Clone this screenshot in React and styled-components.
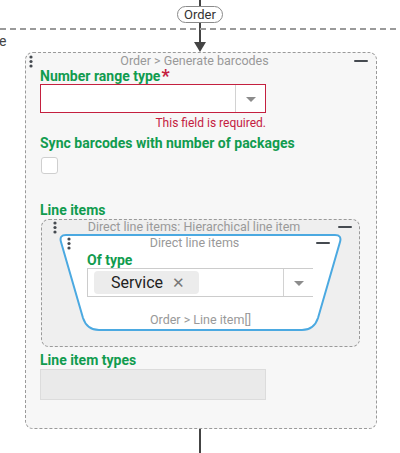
import styled, { createGlobalStyle } from "styled-components";

const GlobalStyle = createGlobalStyle`
  html, body {
    margin: 0;
    padding: 0;
    background: #ffffff;
  }
  body {
    font-family: Roboto, "Liberation Sans", Arial, sans-serif;
  }
  * {
    box-sizing: border-box;
  }
`;

const GREEN = "#119c4f";
const RED = "#c4203f";

const Canvas = styled.div`
  position: relative;
  width: 400px;
  height: 453px;
  overflow: hidden;
  background: #fff;
`;

const LaneLine = styled.div`
  position: absolute;
  top: 28px;
  left: 0;
  right: 0;
  height: 2px;
  background: repeating-linear-gradient(
    to right,
    #9a9a9a 0 6px,
    transparent 6px 10px
  );
`;

const LaneLabel = styled.span`
  position: absolute;
  top: 32px;
  left: -1px;
  font-size: 14px;
  line-height: 18px;
  color: #444;
`;

const Flow = styled.div`
  display: flex;
  flex-direction: column;
  align-items: center;
`;

const Stem = styled.div`
  width: 1.5px;
  height: ${(p) => p.$h}px;
  background: #444;
`;

const Pill = styled.div`
  position: relative;
  height: 17px;
  padding: 0 6px;
  border: 1px solid #8a8a8a;
  border-radius: 9px;
  background: #fff;
  font-size: 13px;
  line-height: 15px;
  color: #333;
`;

const ArrowHead = styled.div`
  width: 0;
  height: 0;
  border-left: 6px solid transparent;
  border-right: 6px solid transparent;
  border-top: 10px solid #444;
`;

const Node = styled.div`
  align-self: flex-start;
  margin-left: 25px;
  width: 352px;
  height: 377px;
  border: 1px dashed #9a9a9a;
  border-radius: 8px;
  background: #f7f7f7;
  padding: 0 0 0 14px;
`;

const Header = styled.div`
  display: flex;
  align-items: center;
  height: ${(p) => p.$h}px;
  margin-left: ${(p) => p.$ml}px;
  margin-right: ${(p) => p.$mr}px;
`;

const Title = styled.div`
  flex: 1;
  text-align: center;
  font-size: 12.5px;
  line-height: 14px;
  color: #999;
  white-space: nowrap;
`;

const Minus = styled.div`
  width: 14px;
  height: 2.5px;
  border-radius: 1px;
  background: #454a50;
  margin-left: ${(p) => p.$gap || 0}px;
`;

const Dots = () => (
  <svg width="8" height="13" viewBox="0 0 8 13">
    <circle cx="4" cy="2" r="1.6" fill="#454a50" />
    <circle cx="4" cy="6.5" r="1.6" fill="#454a50" />
    <circle cx="4" cy="11" r="1.6" fill="#454a50" />
  </svg>
);

const Label = styled.div`
  font-size: 14px;
  font-weight: 700;
  line-height: 15px;
  color: ${GREEN};
  margin-top: ${(p) => p.$mt || 0}px;
  white-space: nowrap;
`;

const Required = styled.span`
  color: ${RED};
  font-size: 18px;
  line-height: 0;
  position: relative;
  top: 1px;
  margin-left: 1px;
`;

const Select = styled.div`
  display: flex;
  align-items: stretch;
  width: 226px;
  height: ${(p) => p.$h}px;
  background: #fff;
  border: 1px solid ${(p) => (p.$invalid ? RED : "#cccccc")};
  ${(p) => p.$open && "border-right: none;"}
  margin-top: ${(p) => p.$mt || 0}px;
`;

const Value = styled.div`
  flex: 1;
  display: flex;
  align-items: center;
  padding-left: 6px;
`;

const Toggle = styled.div`
  width: 30px;
  border-left: 1px solid #d2d2d2;
  display: flex;
  align-items: center;
  justify-content: center;
  padding-top: 2px;
`;

const Caret = styled.div`
  width: 0;
  height: 0;
  border-left: 5px solid transparent;
  border-right: 5px solid transparent;
  border-top: 5px solid #8c8c8c;
`;

const ErrorText = styled.div`
  width: 226px;
  text-align: right;
  font-size: 12px;
  line-height: 14px;
  color: ${RED};
  margin-top: 3px;
`;

const Checkbox = styled.div`
  width: 17px;
  height: 17px;
  margin: 6px 0 0 1px;
  border: 1px solid #cfcfcf;
  border-radius: 3px;
  background: #fff;
`;

const Group = styled.div`
  width: 319px;
  height: 128px;
  margin: 1px 0 0 1px;
  border: 1px dashed #9a9a9a;
  border-radius: 8px;
  background: #efefef;
  display: flex;
  flex-direction: column;
`;

const TrapShape = styled.div`
  position: relative;
  width: 283px;
  height: 97px;
  margin-left: 17px;
`;

const TrapOutline = styled.svg`
  position: absolute;
  inset: 0;
`;

const TrapBody = styled.div`
  position: relative;
  display: flex;
  flex-direction: column;
  padding-top: 2px;
`;

const TrapField = styled.div`
  padding-left: 28px;
`;

const Chip = styled.div`
  display: flex;
  align-items: center;
  width: 105px;
  height: 23px;
  padding-left: 17px;
  border-radius: 4px;
  background: #ececec;
  font-size: 16px;
  color: #222;
`;

const ChipClose = styled.span`
  margin-left: 9px;
  font-size: 15px;
  color: #777;
`;

const Footer = styled.div`
  margin-top: 16px;
  text-align: center;
  font-size: 12.5px;
  line-height: 14px;
  color: #999;
`;

const Disabled = styled.div`
  width: 226px;
  height: 31px;
  margin-top: 1px;
  background: #eaeaea;
  border: 1px solid #dcdcdc;
`;

export default function App() {
  return (
    <Canvas>
      <GlobalStyle />
      <LaneLine />
      <LaneLabel>e</LaneLabel>
      <Flow>
        <Stem $h={6} />
        <Pill>Order</Pill>
        <Stem $h={19} />
        <ArrowHead />
        <Node>
          <Header $h={16} $ml={-13} $mr={8}>
            <Dots />
            <Title>Order &gt; Generate barcodes</Title>
            <Minus />
          </Header>
          <Label>
            Number range type<Required>*</Required>
          </Label>
          <Select $h={29} $invalid>
            <Value />
            <Toggle>
              <Caret />
            </Toggle>
          </Select>
          <ErrorText>This field is required.</ErrorText>
          <Label $mt={6}>Sync barcodes with number of packages</Label>
          <Checkbox />
          <Label $mt={29}>Line items</Label>
          <Group>
            <Header $h={14} $ml={9} $mr={7}>
              <Dots />
              <Title>Direct line items: Hierarchical line item</Title>
              <Minus $gap={9} />
            </Header>
            <TrapShape>
              <TrapOutline width="283" height="97" viewBox="0 0 283 97">
                <path
                  d="M7 1 L276 1 Q283 1 281 8 L259 84 Q255 96 243 96 L40 96 Q28 96 24 84 L2 8 Q0 1 7 1 Z"
                  fill="#ffffff"
                  stroke="#4ba9e1"
                  strokeWidth="2"
                />
              </TrapOutline>
              <TrapBody>
                <Header $h={14} $ml={6} $mr={12}>
                  <Dots />
                  <Title>Direct line items</Title>
                  <Minus />
                </Header>
                <TrapField>
                  <Label $mt={3}>Of type</Label>
                  <Select $h={29} $open>
                    <Value>
                      <Chip>
                        Service<ChipClose>✕</ChipClose>
                      </Chip>
                    </Value>
                    <Toggle>
                      <Caret />
                    </Toggle>
                  </Select>
                </TrapField>
                <Footer>Order &gt; Line item[]</Footer>
              </TrapBody>
            </TrapShape>
          </Group>
          <Label $mt={6}>Line item types</Label>
          <Disabled />
        </Node>
        <Stem $h={30} />
      </Flow>
    </Canvas>
  );
}
